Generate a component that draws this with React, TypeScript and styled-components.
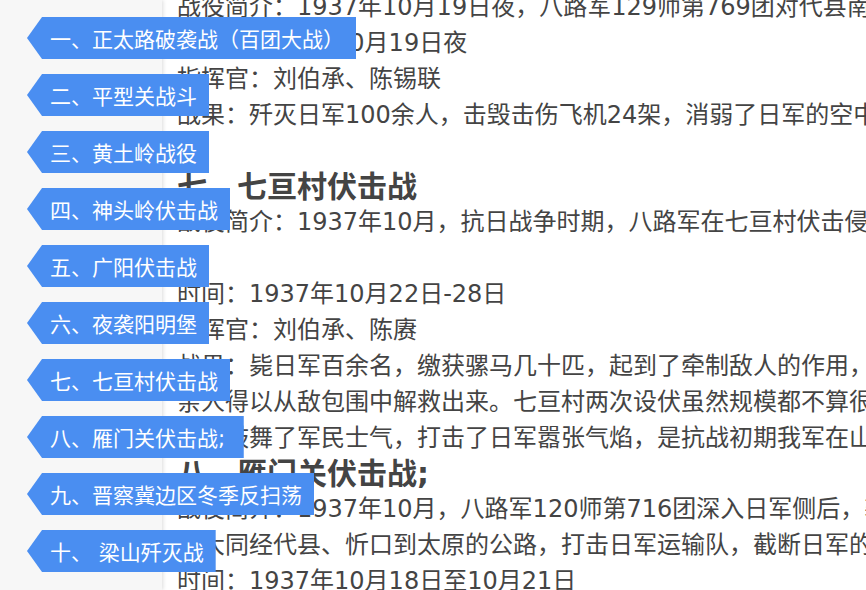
import React from 'react';
import styled, { createGlobalStyle } from 'styled-components';

const GlobalStyle = createGlobalStyle`
  html, body {
    margin: 0;
    padding: 0;
    height: 100%;
    overflow: hidden;
    background: #ffffff;
  }
  body {
    font-family: "DejaVu Sans", "Noto Sans CJK SC", sans-serif;
  }
`;

const Page = styled.div`
  position: relative;
  display: flex;
  width: 866px;
  height: 590px;
  overflow: hidden;
`;

const Sidebar = styled.aside`
  flex: 0 0 162px;
  background: #f7f7f7;
  box-shadow: 1px 0 4px rgba(0, 0, 0, 0.14);
  z-index: 1;
`;

const Article = styled.article`
  flex: 1;
  min-width: 0;
  margin-top: -10px;
  padding-left: 15px;
  color: #444444;
  font-size: 24px;
  line-height: 35.875px;
`;

const Line = styled.p`
  margin: 0;
  height: 35.875px;
  white-space: nowrap;
`;

const Heading = styled.h3`
  margin: 0;
  height: 35.875px;
  font-size: 30px;
  font-weight: 700;
  white-space: nowrap;
  color: #444444;
`;

// floating catalogue of battles, laid over the article
const Catalog = styled.nav`
  position: absolute;
  left: 27px;
  top: 17px;
  z-index: 2;
  display: flex;
  flex-direction: column;
  align-items: flex-start;
  gap: 15px;
`;

const Tab = styled.a`
  display: inline-flex;
  align-items: center;
  height: 42px;
  padding: 0 12px 0 23px;
  background: #4a8ef1;
  color: #ffffff;
  font-size: 21px;
  white-space: pre;
  text-decoration: none;
  clip-path: polygon(15px 0, 100% 0, 100% 100%, 15px 100%, 0 50%);
  cursor: pointer;
`;

const battles = [
  '一、正太路破袭战（百团大战）',
  '二、平型关战斗',
  '三、黄土岭战役',
  '四、神头岭伏击战',
  '五、广阳伏击战',
  '六、夜袭阳明堡',
  '七、七亘村伏击战',
  '八、雁门关伏击战; ',
  '九、晋察冀边区冬季反扫荡',
  '十、 梁山歼灭战',
];

type Row = { kind: 'text' | 'title'; text: string };

const rows: Row[] = [
  { kind: 'text', text: '战役简介：1937年10月19日夜，八路军129师第769团对代县南阳明堡日军机场发起夜袭' },
  { kind: 'text', text: '时间：1937年10月19日夜' },
  { kind: 'text', text: '指挥官：刘伯承、陈锡联' },
  { kind: 'text', text: '战果：歼灭日军100余人，击毁击伤飞机24架，消弱了日军的空中力量' },
  { kind: 'text', text: '' },
  { kind: 'title', text: '七、七亘村伏击战' },
  { kind: 'text', text: '战役简介：1937年10月，抗日战争时期，八路军在七亘村伏击侵华日军' },
  { kind: 'text', text: '' },
  { kind: 'text', text: '时间：1937年10月22日-28日' },
  { kind: 'text', text: '指挥官：刘伯承、陈赓' },
  { kind: 'text', text: '战果：毙日军百余名，缴获骡马几十匹，起到了牵制敌人的作用，使娘子关一带的' },
  { kind: 'text', text: '亲人得以从敌包围中解救出来。七亘村两次设伏虽然规模都不算很大，但' },
  { kind: 'text', text: '极大鼓舞了军民士气，打击了日军嚣张气焰，是抗战初期我军在山西的胜利' },
  { kind: 'title', text: '八、雁门关伏击战;' },
  { kind: 'text', text: '战役简介：1937年10月，八路军120师第716团深入日军侧后，袭击' },
  { kind: 'text', text: '从大同经代县、忻口到太原的公路，打击日军运输队，截断日军的补给线' },
  { kind: 'text', text: '时间：1937年10月18日至10月21日' },
];

export default function App() {
  return (
    <>
      <GlobalStyle />
      <Page>
        <Sidebar />
        <Article>
          {rows.map((row, i) =>
            row.kind === 'title' ? (
              <Heading key={i}>{row.text}</Heading>
            ) : (
              <Line key={i}>{row.text}</Line>
            )
          )}
        </Article>
        <Catalog>
          {battles.map((name) => (
            <Tab key={name}>{name}</Tab>
          ))}
        </Catalog>
      </Page>
    </>
  );
}
